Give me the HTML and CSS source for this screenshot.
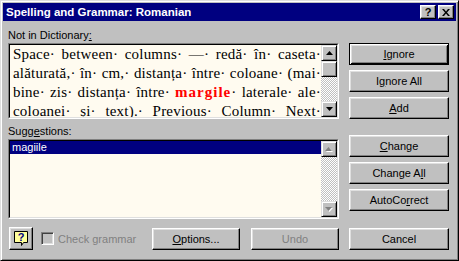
FILE: index.html
```html
<!DOCTYPE html>
<html lang="ro">
<head>
    <meta charset="UTF-8">
    <title>Spelling and Grammar: Romanian</title>
    <link rel="stylesheet" href="styles.css">
</head>
<body>
    <div class="window">
        <div class="titlebar">
            <span class="title">Spelling and Grammar: Romanian</span>
            <div class="caption-buttons">
                <span class="cap-btn help">?</span>
                <span class="cap-btn">
                    <svg width="8" height="7" viewBox="0 0 8 7"><path d="M0 0h2l2 2.5L6 0h2L5 3.5 8 7H6L4 4.5 2 7H0l3-3.5z" fill="#000"/></svg>
                </span>
            </div>
        </div>

        <div class="dialog">
            <div class="main">
                <div class="left">
                    <div class="label">Not in Dictionary<u>:</u></div>
                    <div class="field sentence">
                        <div class="field-inner">
                            <div class="sentence-text">
                                <span class="line">Space· between· columns· —· redă· în· caseta·</span>
                                <span class="line">alăturată,· în· cm,· distanța· între· coloane· (mai·</span>
                                <span class="line">bine· zis· distanța· între· <b class="error">margile</b>· laterale· ale·</span>
                                <span class="line">coloanei· și· text).· Previous· Column· Next·</span>
                            </div>
                            <div class="vscroll">
                                <span class="sb-btn"><svg width="7" height="4" viewBox="0 0 7 4"><path d="M3.5 0L7 4H0z" fill="#000"/></svg></span>
                                <span class="sb-btn thumb"></span>
                                <span class="sb-track"></span>
                                <span class="sb-btn"><svg width="7" height="4" viewBox="0 0 7 4"><path d="M0 0h7L3.5 4z" fill="#000"/></svg></span>
                            </div>
                        </div>
                    </div>

                    <div class="label second">Sugg<u>e</u>stions:</div>
                    <div class="field list">
                        <div class="field-inner">
                            <div class="list-items">
                                <div class="item selected">magiile</div>
                            </div>
                            <div class="vscroll">
                                <span class="sb-btn"><svg width="8" height="5" viewBox="0 0 8 5"><path d="M4.5 1L8 5H1z" fill="#fff"/><path d="M3.5 0L7 4H0z" fill="#808080"/></svg></span>
                                <span class="sb-track"></span>
                                <span class="sb-btn"><svg width="8" height="5" viewBox="0 0 8 5"><path d="M1 1h7L4.5 5z" fill="#fff"/><path d="M0 0h7L3.5 4z" fill="#808080"/></svg></span>
                            </div>
                        </div>
                    </div>
                </div>

                <div class="right">
                    <div class="btn default"><u>I</u>gnore</div>
                    <div class="btn">I<u>g</u>nore All</div>
                    <div class="btn"><u>A</u>dd</div>
                    <div class="btn gap"><u>C</u>hange</div>
                    <div class="btn">Change A<u>l</u>l</div>
                    <div class="btn">AutoCo<u>r</u>rect</div>
                </div>
            </div>

            <div class="bottom">
                <div class="btn help-btn">
                    <svg width="14" height="16" viewBox="0 0 14 16">
                        <path d="M0.5 0.5h13v11h-4l-2 3v-3h-7z" fill="#ffff9c" stroke="#000"/>
                        <text x="7" y="10" text-anchor="middle" font-family="Liberation Sans, Arial, sans-serif" font-weight="bold" font-size="11" fill="#000080">?</text>
                    </svg>
                </div>
                <span class="checkbox"></span>
                <span class="check-label">Check grammar</span>
                <div class="btn options"><u>O</u>ptions...</div>
                <div class="btn undo disabled">Undo</div>
                <div class="btn cancel">Cancel</div>
            </div>
        </div>
    </div>
</body>
</html>
```

FILE: styles.css
```css
body {
    margin: 0;
    background: #c0c0c0;
}

.window {
    width: 459px;
    height: 261px;
    box-sizing: border-box;
    background: #c0c0c0;
    border: 1px solid;
    border-color: #dfdfdf #000 #000 #dfdfdf;
    box-shadow: inset 1px 1px #fff, inset -1px -1px #808080;
    padding: 2px;
    font: 11px "Liberation Sans", Arial, sans-serif;
    color: #000;
}

.titlebar {
    height: 18px;
    background: #000080;
    display: flex;
    align-items: center;
    justify-content: space-between;
}

.title {
    color: #fff;
    font-weight: bold;
    font-size: 11.5px;
    padding-left: 3px;
}

.caption-buttons {
    display: flex;
    gap: 2px;
    margin-right: 2px;
}

.cap-btn {
    width: 16px;
    height: 14px;
    box-sizing: border-box;
    background: #c0c0c0;
    border: 1px solid;
    border-color: #fff #000 #000 #fff;
    box-shadow: inset -1px -1px #808080, inset 1px 1px #dfdfdf;
    display: flex;
    align-items: center;
    justify-content: center;
}

.cap-btn.help {
    font-weight: bold;
    font-size: 11px;
    line-height: 12px;
}

.dialog {
    padding: 8px 7px 0 5px;
}

.main {
    display: flex;
    gap: 10px;
}

.left {
    width: 331px;
}

.label {
    height: 13px;
    line-height: 13px;
    margin-bottom: 1px;
}

.label.second {
    margin-top: 6px;
}

.field {
    box-sizing: border-box;
    border: 1px solid;
    border-color: #808080 #fff #fff #808080;
}

.field-inner {
    height: 100%;
    box-sizing: border-box;
    border: 1px solid;
    border-color: #000 #dfdfdf #dfdfdf #000;
    display: flex;
}

.sentence {
    height: 76px;
}

.list {
    height: 80px;
}

.sentence-text {
    flex: 1;
    overflow: hidden;
    background: #fffbf0;
    padding-left: 3px;
    font: 15px/19px "Liberation Serif", "Times New Roman", serif;
    letter-spacing: 0.2px;
}

.line {
    display: block;
    white-space: nowrap;
    text-align: justify;
    text-align-last: justify;
}

.error {
    color: #f00;
    letter-spacing: 1px;
}

.vscroll {
    width: 16px;
    display: flex;
    flex-direction: column;
    background: conic-gradient(#c0c0c0 0 25%, #fff 0 50%, #c0c0c0 0 75%, #fff 0) 0 0 / 2px 2px;
}

.sb-btn {
    width: 16px;
    height: 16px;
    box-sizing: border-box;
    background: #c0c0c0;
    border: 1px solid;
    border-color: #dfdfdf #000 #000 #dfdfdf;
    box-shadow: inset 1px 1px #fff, inset -1px -1px #808080;
    display: flex;
    align-items: center;
    justify-content: center;
}

.sb-track {
    flex: 1;
}

.list-items {
    flex: 1;
    background: #fffbf0;
}

.item {
    height: 13px;
    line-height: 13px;
    padding-left: 2px;
}

.item.selected {
    background: #000080;
    color: #fff;
}

.right {
    width: 100px;
    padding-top: 14px;
}

.btn {
    height: 22px;
    box-sizing: border-box;
    background: #c0c0c0;
    border: 1px solid;
    border-color: #fff #000 #000 #fff;
    box-shadow: inset -1px -1px #808080, inset 1px 1px #dfdfdf;
    display: flex;
    align-items: center;
    justify-content: center;
    margin-bottom: 5px;
}

.btn.default {
    border-color: #000;
    box-shadow: inset 1px 1px #fff, inset -1px -1px #000, inset 2px 2px #dfdfdf, inset -2px -2px #808080;
}

.btn.gap {
    margin-top: 16px;
}

.bottom {
    display: flex;
    align-items: center;
    margin-top: 8px;
}

.bottom .btn {
    margin-bottom: 0;
}

.help-btn {
    width: 24px;
    height: 23px;
    margin-left: 1px;
}

.checkbox {
    width: 13px;
    height: 13px;
    box-sizing: border-box;
    margin-left: 8px;
    border: 1px solid;
    border-color: #808080 #fff #fff #808080;
    box-shadow: inset 1px 1px #404040, inset -1px -1px #dfdfdf;
    background: #c0c0c0;
}

.check-label {
    margin-left: 4px;
    color: #808080;
}

.options {
    width: 88px;
    margin-left: auto;
    margin-top: 1px;
}

.undo {
    width: 88px;
    margin-left: 11px;
    margin-top: 1px;
}

.cancel {
    width: 100px;
    margin-left: 10px;
    margin-top: 1px;
}

.disabled {
    color: #808080;
}
```
